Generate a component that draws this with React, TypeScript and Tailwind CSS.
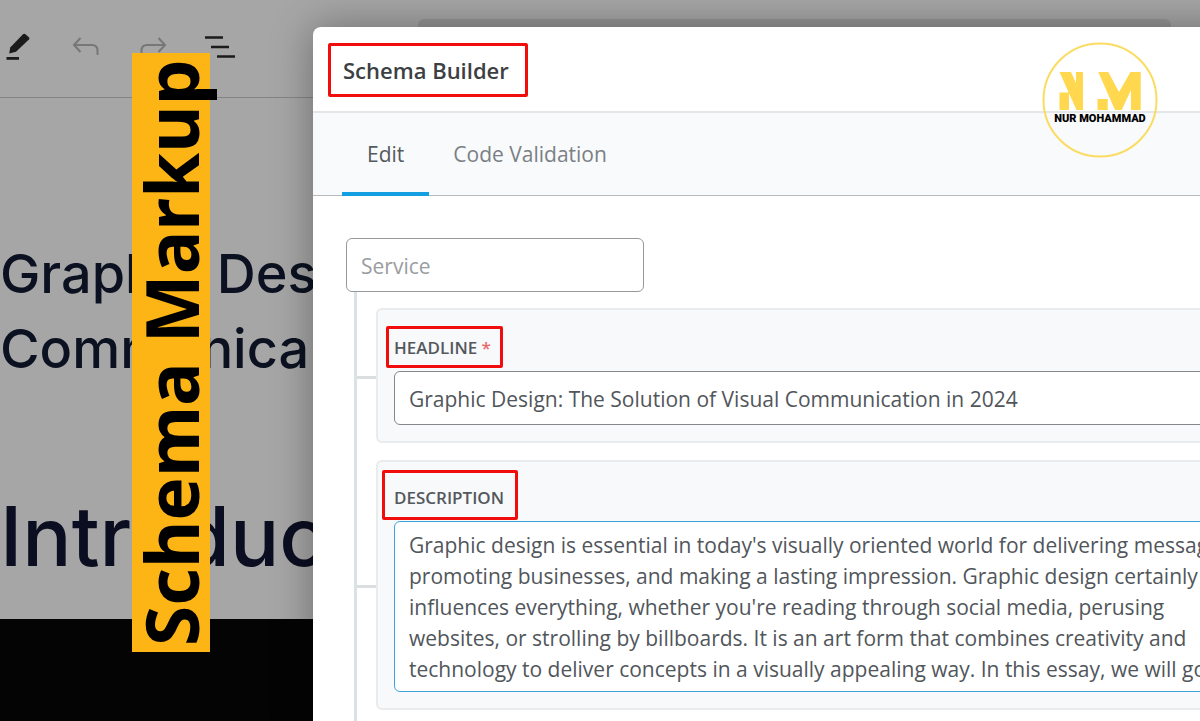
import type { ReactNode } from "react";

const DESCRIPTION = [
  "Graphic design is essential in today's visually oriented world for delivering messages,",
  "promoting businesses, and making a lasting impression. Graphic design certainly",
  "influences everything, whether you're reading through social media, perusing",
  "websites, or strolling by billboards. It is an art form that combines creativity and",
  "technology to deliver concepts in a visually appealing way. In this essay, we will go",
].join("\n");

function EditorToolbar() {
  return (
    <div className="flex h-[98px] items-center border-b border-[#858585] pb-1 pl-1.5">
      <button type="button" aria-label="Edit">
        <svg className="h-7 w-6" viewBox="0 0 24 28" fill="#1b1b1b">
          <path d="M3.2 20.5 4.2 14.6 17 1.2Q18.2.2 19.5 1.2L22.8 4.2Q24 5.4 22.9 6.6L10 18.8Z" />
          <rect x="0.5" y="24" width="12.5" height="2.8" />
        </svg>
      </button>
      <button type="button" aria-label="Undo" className="ml-[42px]">
        <svg className="h-6 w-7" viewBox="0 0 28 24" fill="none" stroke="#777" strokeWidth={2}>
          <path d="M8.5 3 2 10l6.5 7M2 10h18q5.5 0 5.5 5.5V20" />
        </svg>
      </button>
      <button type="button" aria-label="Redo" className="ml-[39px]">
        <svg className="h-6 w-7" viewBox="0 0 28 24" fill="none" stroke="#777" strokeWidth={2}>
          <path d="M19.5 3 26 10l-6.5 7M26 10H8Q2.5 10 2.5 15.5V20" />
        </svg>
      </button>
      <button type="button" aria-label="Document overview" className="ml-[37px]">
        <svg className="h-6 w-8" viewBox="0 0 32 24" stroke="#1b1b1b" strokeWidth={2.6}>
          <path d="M1 2.5h18M7 12h18M13 21.5h18" />
        </svg>
      </button>
      <div className="ml-[182px] mr-[29px] h-[56px] flex-1 rounded-md bg-[#969696]" />
    </div>
  );
}

function Highlight({ className }: { className: string }) {
  return <span aria-hidden className={`pointer-events-none absolute rounded-xs border-3 border-[#f20d0d] ${className}`} />;
}

function FieldGroup({ children }: { children: ReactNode }) {
  return (
    <div className="relative rounded-md border-2 border-[#e9ebec] bg-[#f8f9fb] px-4 pb-4">
      {/* branch from the tree line */}
      <span className="absolute top-1/2 -left-[21px] h-[3px] w-[19px] bg-[#dcdfe0]" />
      {children}
    </div>
  );
}

function Logo() {
  return (
    <div className="absolute top-[42px] right-[42px] size-[116px]">
      <svg className="size-full" viewBox="0 0 116 116" fill="#ffd84f">
        <circle cx="58" cy="58" r="56.5" fill="none" stroke="#fbdc62" strokeWidth={2} />
        <path d="M17.5 30H29L34 41V30h7v38h-6.500ZM17.500 50.500H27V68h-9.500Z" />
        <path d="M56.3 30h10L77 50 88.500 30h10.200v38H89V48L79.700 68H73ZM55.500 57h10.200v11H55.500Z" />
      </svg>
      <span className="absolute inset-x-0 top-[69px] text-center font-['Roboto'] text-[11px] leading-4 font-black whitespace-nowrap text-black">
        NUR MOHAMMAD
      </span>
    </div>
  );
}

export default function App() {
  return (
    <div className="relative h-screen overflow-hidden bg-[#a6a6a6] font-['Open_Sans',sans-serif]">
      <div className="flex h-full flex-col">
        <EditorToolbar />
        <h1 className="mt-[138px] font-['Inter'] text-[54px] leading-[75px] font-medium whitespace-nowrap text-[#0b1120]">
          Graphic Des
          <br />
          Communica
        </h1>
        <h2 className="mt-[101px] font-['Inter'] text-[82px] leading-[100px] font-medium text-[#0b0e20]">Introduc</h2>
        <div className="mt-8 flex-1 bg-[#040405]" />
      </div>

      <div className="absolute inset-0 overflow-hidden pt-[27px] pl-[313px]">
        <div role="dialog" aria-label="Schema Builder" className="h-full w-full min-w-[960px] rounded-tl-lg bg-white shadow-[0_0_40px_rgba(0,0,0,0.35)]">
          <header className="flex h-[86px] items-center border-b-2 border-[#e4e6e8] pt-0.5 pl-[15px]">
            <h3 className="rounded-xs border-3 border-[#f20d0d] py-2 pr-4 pl-3 text-[22px] leading-8 font-semibold text-[#3c4043]">
              Schema Builder
            </h3>
          </header>
          <nav className="flex h-[83px] border-b border-[#b5babd] bg-[#f8fafc] pl-[29px] text-[21px]">
            <button type="button" className="-mb-px border-b-4 border-[#149fe2] px-[25px] pt-1 text-[#555a5e]">
              Edit
            </button>
            <button type="button" className="px-6 pt-px text-[#7b8084]">
              Code Validation
            </button>
          </nav>

          <div className="pt-[42px] pl-[33px]">
            <input
              aria-label="Schema type"
              readOnly
              value="Service"
              className="block h-[54px] w-[298px] rounded-md border border-[#96999b] px-[14px] pt-0.5 text-[21px] text-[#9a9da0] outline-none"
            />
            <div className="ml-2 flex h-[460px] flex-col gap-[17px] border-l-3 border-[#dbe2e3] pt-4 pl-[19px]">
              <FieldGroup>
                <label htmlFor="headline" className="relative mt-[22px] mb-[7px] inline-block text-[17px] leading-8 font-semibold text-[#53585c]">
                  HEADLINE <span className="text-[#e86b6b]">*</span>
                  <Highlight className="-top-1.5 -right-3 -bottom-1 -left-2" />
                </label>
                <input
                  id="headline"
                  defaultValue="Graphic Design: The Solution of Visual Communication in 2024"
                  className="block h-[54px] w-full rounded-md border border-[#85898b] bg-white px-[14px] pt-0.5 text-[21px] text-[#51565b] outline-none"
                />
              </FieldGroup>
              <FieldGroup>
                <label htmlFor="description" className="relative mt-[20px] mb-[7px] inline-block text-[17px] leading-8 font-semibold text-[#53585c]">
                  DESCRIPTION
                  <Highlight className="-top-3 -right-3.5 -bottom-1.5 -left-3" />
                </label>
                <textarea
                  id="description"
                  wrap="off"
                  defaultValue={DESCRIPTION}
                  className="block h-[171px] w-full resize-none overflow-hidden rounded-md border border-[#3ba5d8] bg-white px-[14px] py-[8px] text-[21px] leading-[31px] text-[#51565b] outline-none"
                />
              </FieldGroup>
            </div>
          </div>
        </div>
      </div>

      <div className="absolute top-[53px] left-[132px] flex h-[599px] w-[78px] rotate-180 items-center justify-center bg-[#fdb515] font-['Noto_Sans'] text-[73px] leading-[78px] font-bold whitespace-nowrap text-black [writing-mode:vertical-rl]">
        Schema Markup
      </div>
      <Logo />
    </div>
  );
}
